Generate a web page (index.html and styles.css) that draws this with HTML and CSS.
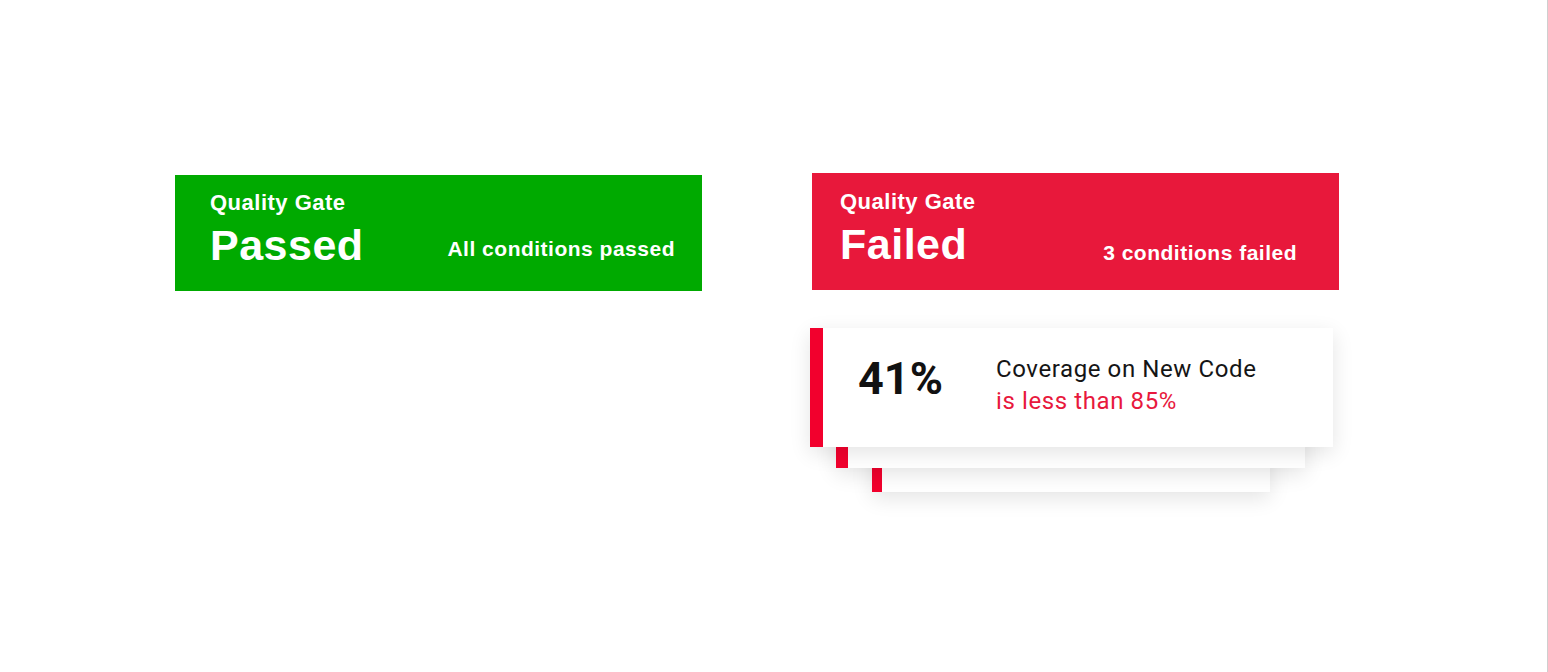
FILE: index.html
```html
<!DOCTYPE html>
<html lang="en">
<head>
    <meta charset="UTF-8">
    <meta name="viewport" content="width=device-width, initial-scale=1.0">
    <title>Quality Gate</title>
    <link rel="stylesheet" href="styles.css">
</head>
<body>

    <div class="page">

        <div class="column">
            <div class="gate gate-passed">
                <div class="gate-label">Quality Gate</div>
                <div class="gate-row">
                    <div class="gate-status">Passed</div>
                    <div class="gate-summary">All conditions passed</div>
                </div>
            </div>
        </div>

        <div class="column">
            <div class="gate gate-failed">
                <div class="gate-label">Quality Gate</div>
                <div class="gate-row">
                    <div class="gate-status">Failed</div>
                    <div class="gate-summary">3 conditions failed</div>
                </div>
            </div>

            <div class="conditions">
                <div class="condition condition-back2"></div>
                <div class="condition condition-back1"></div>
                <div class="condition condition-front">
                    <div class="condition-value">41%</div>
                    <div class="condition-text">
                        <div class="condition-metric">Coverage on New Code</div>
                        <div class="condition-rule">is less than 85%</div>
                    </div>
                </div>
            </div>
        </div>

    </div>

</body>
</html>
```

FILE: styles.css
```css
body {
    margin: 0;
    padding: 0;
    background-color: #fff;
    font-family: "Liberation Sans", Arial, sans-serif;
}

.page {
    box-sizing: border-box;
    width: 1548px;
    height: 672px;
    border-right: 1px solid #cfcfcf;
    display: flex;
    align-items: flex-start;
    gap: 108px;
    padding: 173px 0 0 175px;
}

.column {
    display: flex;
    flex-direction: column;
}

.gate {
    box-sizing: border-box;
    width: 527px;
    color: #fff;
    font-weight: bold;
}

.gate-passed {
    background-color: #00aa00;
    height: 116px;
    margin-top: 2px;
    padding: 16px 27px 0 35px;
}

.gate-failed {
    background-color: #e8183b;
    height: 117px;
    margin-left: 2px;
    padding: 17px 42px 0 28px;
}

.gate-label {
    font-size: 22px;
    line-height: 24px;
    letter-spacing: 0.5px;
}

.gate-row {
    display: flex;
    justify-content: space-between;
    align-items: flex-end;
    margin-top: 8px;
}

.gate-status {
    font-size: 43px;
    line-height: 44px;
    letter-spacing: 0.5px;
}

.gate-summary {
    font-size: 21px;
    line-height: 24px;
    letter-spacing: 0.5px;
}

.gate-passed .gate-summary {
    margin-bottom: 6px;
}

.gate-failed .gate-summary {
    margin-bottom: 1px;
}

/* stacked condition cards */
.conditions {
    display: grid;
    margin-top: 38px;
    font-family: Roboto, "Liberation Sans", sans-serif;
}

.condition {
    grid-area: 1 / 1;
    box-sizing: border-box;
    height: 119px;
    background-color: #fff;
    border-left: 13px solid #f2002d;
    box-shadow: 0 6px 20px rgba(0, 0, 0, 0.11);
}

.condition-front {
    z-index: 3;
    width: 523px;
    display: flex;
    align-items: flex-start;
    padding: 25px 0 0 35px;
}

.condition-back1 {
    z-index: 2;
    width: 469px;
    margin: 21px 0 0 26px;
    border-left-width: 12px;
}

.condition-back2 {
    z-index: 1;
    width: 398px;
    margin: 45px 0 0 62px;
    border-left-width: 10px;
}

.condition-value {
    width: 138px;
    font-size: 45px;
    line-height: 52px;
    font-weight: bold;
    color: #111;
}

.condition-text {
    font-size: 24px;
    line-height: 32px;
    letter-spacing: 0.6px;
}

.condition-metric {
    color: #151515;
}

.condition-rule {
    color: #e8183d;
}
```
